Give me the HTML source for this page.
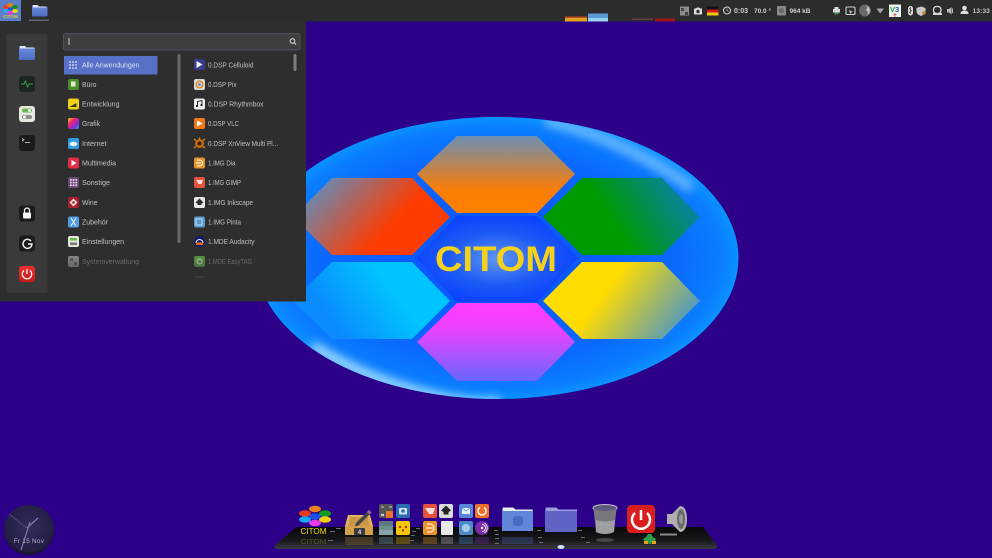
<!DOCTYPE html>
<html><head><meta charset="utf-8">
<style>
html,body{margin:0;padding:0;width:992px;height:558px;overflow:hidden;background:#2c0089}
body{position:relative;font-family:"Liberation Sans",sans-serif}
svg{position:absolute;left:0;top:0;filter:blur(.35px)}
</style></head><body>
<svg width="992" height="558" viewBox="0 0 992 558" xmlns="http://www.w3.org/2000/svg" font-family="Liberation Sans, sans-serif">
<defs>
<radialGradient id="ell" cx="0.5" cy="0.5" r="0.5"><stop offset="0" stop-color="#0a50ff"/><stop offset=".72" stop-color="#0a68ff"/><stop offset=".93" stop-color="#0a7eff"/><stop offset="1" stop-color="#0a92ff"/></radialGradient>
<clipPath id="ec"><ellipse cx="497" cy="258" rx="241.500" ry="141"/></clipPath>
<filter id="b5" x="-20%" y="-20%" width="140%" height="140%"><feGaussianBlur stdDeviation="5"/></filter>
<linearGradient id="hT" x1="0" y1="0" x2="0" y2="1"><stop offset="0" stop-color="#6c8fb4"/><stop offset=".7" stop-color="#fa7d05"/><stop offset="1" stop-color="#ff8000"/></linearGradient>
<linearGradient id="hL" gradientUnits="userSpaceOnUse" x1="322" y1="172" x2="385" y2="232"><stop offset="0" stop-color="#5e8fc0"/><stop offset="1" stop-color="#ff3c00"/></linearGradient>
<linearGradient id="hR" gradientUnits="userSpaceOnUse" x1="622" y1="238" x2="690" y2="195"><stop offset="0" stop-color="#009a00"/><stop offset="1" stop-color="#0a80a8"/></linearGradient>
<linearGradient id="hLL" gradientUnits="userSpaceOnUse" x1="335" y1="325" x2="390" y2="285"><stop offset="0" stop-color="#0a8cff"/><stop offset="1" stop-color="#00c4ff"/></linearGradient>
<linearGradient id="hLR" gradientUnits="userSpaceOnUse" x1="600" y1="298" x2="670" y2="350"><stop offset="0" stop-color="#ffdc00"/><stop offset="1" stop-color="#4a96c8"/></linearGradient>
<linearGradient id="hB" x1="0" y1="0" x2="0" y2="1"><stop offset="0" stop-color="#ff3cff"/><stop offset=".3" stop-color="#f040ff"/><stop offset="1" stop-color="#6a66ff"/></linearGradient>
<radialGradient id="hC" cx=".5" cy=".5" r=".55"><stop offset="0" stop-color="#5f96f0"/><stop offset=".55" stop-color="#1c5af5"/><stop offset="1" stop-color="#0a40ff"/></radialGradient>
<linearGradient id="plate" x1="0" y1="0" x2="0" y2="1"><stop offset="0" stop-color="#08080a"/><stop offset=".6" stop-color="#18181c"/><stop offset="1" stop-color="#3a3a40"/></linearGradient>
<linearGradient id="fold" x1="0" y1="0" x2="0" y2="1"><stop offset="0" stop-color="#6e8fde"/><stop offset="1" stop-color="#4c6cc4"/></linearGradient>
<radialGradient id="clk" cx=".5" cy=".45" r=".55"><stop offset="0" stop-color="#332d60"/><stop offset=".85" stop-color="#241f44"/><stop offset="1" stop-color="#17132c"/></radialGradient>
<linearGradient id="fade" x1="0" y1="0" x2="0" y2="1"><stop offset="0" stop-color="#2e2e2e" stop-opacity="0"/><stop offset="1" stop-color="#2e2e2e" stop-opacity="1"/></linearGradient>
<linearGradient id="rain" x1="0" y1="0" x2="1" y2="1"><stop offset="0" stop-color="#f0d020"/><stop offset=".35" stop-color="#f02070"/><stop offset=".7" stop-color="#8030e0"/><stop offset="1" stop-color="#20a0e0"/></linearGradient>
<linearGradient id="pw" x1="0" y1="0" x2="0" y2="1"><stop offset="0" stop-color="#e83030"/><stop offset="1" stop-color="#c81a1a"/></linearGradient>
</defs>

<!-- wallpaper logo -->
<ellipse cx="497" cy="258" rx="241.500" ry="141" fill="url(#ell)"/>
<g clip-path="url(#ec)">
<path d="M312 346Q360 376 417 392T500 402" fill="none" stroke="#bfe6ff" stroke-width="10" opacity=".9" filter="url(#b5)"/>
<path d="M545 120Q625 140 692 188" fill="none" stroke="#8cccff" stroke-width="10" opacity=".8" filter="url(#b5)"/>
</g>
<polygon points="457,216 537,216 578,258 537,302 457,302 416,258" fill="url(#hC)"/>
<polygon points="417,174 457,136 537,136 575,174 537,213 457,213" fill="url(#hT)"/>
<polygon points="293,217 332,178 412,178 450,217 412,255 332,255" fill="url(#hL)"/>
<polygon points="543,217 582,178 662,178 700,217 662,255 582,255" fill="url(#hR)"/>
<polygon points="293,301 332,262 412,262 450,301 412,339 332,339" fill="url(#hLL)"/>
<polygon points="543,301 582,262 662,262 700,301 662,339 582,339" fill="url(#hLR)"/>
<polygon points="417,342 457,303 537,303 575,342 537,381 457,381" fill="url(#hB)"/>
<text x="496" y="271" text-anchor="middle" font-size="35" font-weight="bold" fill="#f4d21c" textLength="122" lengthAdjust="spacingAndGlyphs">CITOM</text>

<!-- top panel -->
<rect x="0" y="0" width="992" height="21.500" fill="#2c2c2c"/>
<rect x="0" y="0" width="21" height="21" fill="#5b7ec8"/>
<ellipse cx="6" cy="7" rx="3" ry="2" fill="#e84020"/><ellipse cx="10" cy="5" rx="3" ry="2" fill="#f08010"/><ellipse cx="15" cy="7" rx="3" ry="2" fill="#109020"/><ellipse cx="6" cy="11" rx="3" ry="2" fill="#20b0f0"/><ellipse cx="10" cy="13" rx="3" ry="2" fill="#e040e0"/><ellipse cx="15" cy="11" rx="3" ry="2" fill="#f0d010"/><ellipse cx="10.500" cy="9" rx="2.500" ry="1.500" fill="#1050e0"/>
<text x="10.500" y="18" text-anchor="middle" font-size="4.500" font-weight="bold" fill="#e8d030">CITOM</text>
<path d="M32 6 a1 1 0 0 1 1-1 h4 l1.500 1.500 h8 a1 1 0 0 1 1 1 V15.500 a1 1 0 0 1-1 1 H33 a1 1 0 0 1-1-1z" fill="url(#fold)"/><path d="M33 5 h4.500 l1.500 1.500 h7 v1 H33z" fill="#dfe6f5"/>
<rect x="29" y="19.500" width="20" height="1.500" fill="#5c6475"/>

<!-- panel applet graph -->
<rect x="565" y="18" width="22" height="3.500" fill="#e0a020"/><rect x="565" y="16.500" width="22" height="1.500" fill="#c04a20"/><rect x="588" y="13.500" width="20" height="8" fill="#5a9ad8"/><rect x="588" y="18" width="20" height="3.500" fill="#9ad0f0"/><rect x="632" y="18.500" width="21" height="1.500" fill="#6a4048"/><rect x="655" y="18.500" width="20" height="3" fill="#a01818"/>

<!-- tray -->
<g fill="#cfcfcf">
<rect x="680" y="6.500" width="9" height="9" fill="#8d8d8d"/><path d="M681 8h3v3h-3zM685 12h3v3h-3z" fill="#444"/>
<path d="M694 8.500h2l1-1h2l1 1h2v6h-8z" fill="#dcdcdc"/><circle cx="698" cy="11.500" r="1.700" fill="#333"/>
<rect x="707" y="6.500" width="11.500" height="3" fill="#111"/><rect x="707" y="9.500" width="11.500" height="3" fill="#d81818"/><rect x="707" y="12.500" width="11.500" height="3" fill="#f0c810"/>
<circle cx="727" cy="10.500" r="3.500" fill="none" stroke="#d0d0d0" stroke-width="1.100"/><path d="M727 8.500v2l1.500 1" fill="none" stroke="#d0d0d0" stroke-width=".7"/>
<text x="734" y="13" font-size="7" font-weight="bold">0:03</text>
<text x="754" y="13" font-size="6.500" font-weight="bold">70.0 °</text>
<rect x="777" y="6" width="9" height="9.500" rx="1" fill="#8a8a8a"/><circle cx="781.500" cy="10.700" r="2.500" fill="#6a6a6a"/>
<text x="789.500" y="13" font-size="6.500" font-weight="bold">964 kB</text>
<path d="M833 9h7v3.500h-7z" fill="#d8d8d8"/><rect x="834.500" y="7" width="4" height="2" fill="#d8d8d8"/><rect x="834.500" y="12.500" width="4" height="2" fill="#3f9a3f"/>
<rect x="846" y="7" width="9" height="7.500" rx="1" fill="none" stroke="#d0d0d0" stroke-width="1.100"/><path d="M849 10l4 2-2 .5-.5 1.500z" fill="#d0d0d0"/>
<circle cx="865" cy="10.500" r="6" fill="#6a6a6a"/><path d="M865 5.500a5 5 0 0 1 2 9.500 3 3 0 0 0-2-5 2 2 0 0 0 0-4.500z" fill="#c8c8c8"/>
<path d="M876.500 8.500h7.500l-3.750 5z" fill="#a8a8a8"/>
<rect x="889" y="4.500" width="12" height="12.500" fill="#eaf4ea"/><text x="890" y="12" font-size="7.500" font-weight="bold" fill="#1a9a3a">V</text><text x="895" y="12" font-size="7.500" font-weight="bold" fill="#2060c0">3</text><text x="893.500" y="16.500" font-size="5.500" font-weight="bold" fill="#d03030">e</text>
<rect x="908" y="6" width="5" height="9.500" rx="2.500" fill="#d8d8d8"/><path d="M909 8l2.500 2.500-2.500 2.500M910.500 7v7" fill="none" stroke="#333" stroke-width=".6"/>
<path d="M921 6.500l4.500 1.500v3.500c0 2-2 3.500-4.500 4.500-2.500-1-4.500-2.500-4.500-4.500V8z" fill="#c8c8c8"/><circle cx="924" cy="13" r="1.800" fill="#c88030"/>
<rect x="933.500" y="6.500" width="7.500" height="7" rx="3" fill="none" stroke="#d8d8d8" stroke-width="1.300"/><rect x="933" y="13" width="9" height="2" fill="#d8d8d8"/>
<path d="M947 9h2l2.500-2v7.500l-2.500-2h-2z" fill="#b8b8b8"/><path d="M952.500 8.500v4.500" stroke="#b8b8b8" stroke-width="1"/>
<circle cx="964.500" cy="8" r="2.300" fill="#dcdcdc"/><path d="M960.500 14c0-2.500 1.500-3.500 4-3.500s4 1 4 3.500z" fill="#dcdcdc"/>
<text x="972.500" y="13" font-size="6.800" font-weight="bold" fill="#c0c0c0">13:33</text>
</g>

<!-- menu -->
<rect x="0" y="21.500" width="306" height="280" fill="#2e2e2e"/>
<rect x="6.500" y="34" width="41" height="259" fill="#3a3a3a"/>
<rect x="63.500" y="33.500" width="236.500" height="16.500" rx="2" fill="#3f3f3f" stroke="#545a6c" stroke-width=".8"/>
<rect x="68.500" y="38" width="1" height="7" fill="#cfcfcf"/>
<circle cx="292.500" cy="41" r="2.300" fill="none" stroke="#e0e0e0" stroke-width="1"/><path d="M294.300 42.800l1.800 1.800" stroke="#e0e0e0" stroke-width="1"/>
<rect x="64" y="56" width="93.500" height="18.500" fill="#5770c8"/>
<rect x="177.500" y="54" width="3" height="189" rx="1.500" fill="#6a6a6a"/>
<rect x="293.500" y="54" width="3" height="17" rx="1.500" fill="#7d7d7d"/>

<!-- sidebar icons -->
<path d="M19 47a1 1 0 0 1 1-1h4.500l1.500 1.500h8a1 1 0 0 1 1 1V59a1 1 0 0 1-1 1H20a1 1 0 0 1-1-1z" fill="url(#fold)"/><path d="M20 46h5l1.500 1.500h7.500v1H20z" fill="#dfe6f5"/>
<rect x="19" y="76" width="16" height="16" rx="3" fill="#1e2420"/><path d="M21 84h3l1.500-3 2 6 1.500-3h4" fill="none" stroke="#35a84a" stroke-width=".9"/>
<rect x="19" y="106" width="16" height="16" rx="3" fill="#e8e8e2"/><rect x="22" y="108.500" width="10" height="4" rx="2" fill="#6cb84c"/><rect x="22" y="115" width="10" height="4" rx="2" fill="#8c8c8c"/><circle cx="29.500" cy="110.500" r="1.500" fill="#fff"/><circle cx="24.500" cy="117" r="1.500" fill="#fff"/>
<rect x="19" y="135" width="16" height="16" rx="3" fill="#1b1b1b"/><path d="M22 138.500l2 1.300-2 1.300" fill="none" stroke="#ddd" stroke-width=".8"/><rect x="25" y="142" width="5" height=".8" fill="#ccc"/>
<rect x="19" y="205.500" width="16" height="16" rx="3" fill="#1b1b1b"/><rect x="23" y="212.500" width="8" height="6" rx="1" fill="#f4f4f4"/><path d="M24.500 212.500v-2a2.500 2.500 0 0 1 5 0v2" fill="none" stroke="#f4f4f4" stroke-width="1.200"/>
<rect x="19" y="235.500" width="16" height="16" rx="3" fill="#1b1b1b"/><path d="M31 241a4.500 4.500 0 1 0 1 3h-4" fill="none" stroke="#f4f4f4" stroke-width="1.400"/>
<rect x="19" y="266" width="16" height="16" rx="3" fill="url(#pw)"/><path d="M24 270.500a4.700 4.700 0 1 0 6 0" fill="none" stroke="#fff" stroke-width="1.200"/><path d="M27 269v5" stroke="#fff" stroke-width="1.200"/>

<!-- category icons -->
<g fill="#e6ecf8"><circle cx="70" cy="62" r=".9"/><circle cx="73" cy="62" r=".9"/><circle cx="76" cy="62" r=".9"/><circle cx="70" cy="65" r=".9"/><circle cx="73" cy="65" r=".9"/><circle cx="76" cy="65" r=".9"/><circle cx="70" cy="68" r=".9"/><circle cx="73" cy="68" r=".9"/><circle cx="76" cy="68" r=".9"/></g>
<rect x="68" y="79" width="11" height="11" rx="2" fill="#4b8f2c"/><rect x="71" y="81.500" width="4.500" height="5" fill="#dff0d0"/>
<rect x="68" y="98.500" width="11" height="11" rx="2" fill="#f0d010"/><path d="M69.500 107l7-4v4z" fill="#333"/>
<rect x="68" y="118" width="11" height="11" rx="2" fill="url(#rain)"/>
<rect x="68" y="138" width="11" height="11" rx="2" fill="#2e9be0"/><ellipse cx="73.500" cy="144" rx="4" ry="2.200" fill="#e8f4fc"/>
<rect x="68" y="157.500" width="11" height="11" rx="2" fill="#e02c44"/><path d="M71.500 160l5 3-5 3z" fill="#fff"/>
<rect x="68" y="177" width="11" height="11" rx="2" fill="#6e4a78"/><g fill="#e8dcec"><rect x="70" y="179" width="1.700" height="1.700"/><rect x="72.700" y="179" width="1.700" height="1.700"/><rect x="75.400" y="179" width="1.700" height="1.700"/><rect x="70" y="181.700" width="1.700" height="1.700"/><rect x="72.700" y="181.700" width="1.700" height="1.700"/><rect x="75.400" y="181.700" width="1.700" height="1.700"/><rect x="70" y="184.400" width="1.700" height="1.700"/><rect x="72.700" y="184.400" width="1.700" height="1.700"/><rect x="75.400" y="184.400" width="1.700" height="1.700"/></g>
<rect x="68" y="197" width="11" height="11" rx="2" fill="#a82030"/><path d="M73.500 198.500l4 4-4 4-4-4z" fill="#f4e0e0"/><circle cx="73.500" cy="202.500" r="1.300" fill="#a82030"/>
<rect x="68" y="216.500" width="11" height="11" rx="2" fill="#4f9ee8"/><path d="M71 218l5 8M76 218l-5 8" stroke="#fff" stroke-width=".9"/>
<rect x="68" y="236" width="11" height="11" rx="2" fill="#e4e8d8"/><rect x="70" y="238" width="7" height="2.500" fill="#6cb84c"/><rect x="70" y="242.500" width="7" height="2.500" fill="#777"/>
<rect x="68" y="256" width="11" height="11" rx="2" fill="#8a8a8a"/><rect x="70" y="258" width="3" height="3" fill="#5c5c5c"/><rect x="74" y="262" width="3" height="3" fill="#5c5c5c"/>

<g font-size="7.200" fill="#c2c2c2">
<text x="82" y="67.500" fill="#dde2f2" textLength="57.500" lengthAdjust="spacingAndGlyphs">Alle Anwendungen</text>
<text x="82" y="87" textLength="14.500" lengthAdjust="spacingAndGlyphs">Büro</text>
<text x="82" y="106.500" textLength="37.500" lengthAdjust="spacingAndGlyphs">Entwicklung</text>
<text x="82" y="126.200" textLength="18" lengthAdjust="spacingAndGlyphs">Grafik</text>
<text x="82" y="146" textLength="24.500" lengthAdjust="spacingAndGlyphs">Internet</text>
<text x="82" y="165.500" textLength="34" lengthAdjust="spacingAndGlyphs">Multimedia</text>
<text x="82" y="185.200" textLength="28" lengthAdjust="spacingAndGlyphs">Sonstige</text>
<text x="82" y="205" textLength="15.500" lengthAdjust="spacingAndGlyphs">Wine</text>
<text x="82" y="224.500" textLength="26" lengthAdjust="spacingAndGlyphs">Zubehör</text>
<text x="82" y="244.200" textLength="42" lengthAdjust="spacingAndGlyphs">Einstellungen</text>
<text x="82" y="264" fill="#7a7a7a" textLength="57" lengthAdjust="spacingAndGlyphs">Systemverwaltung</text>
<text x="208" y="67.500" textLength="45.500" lengthAdjust="spacingAndGlyphs">0.DSP Celluloid</text>
<text x="208" y="87" textLength="28.500" lengthAdjust="spacingAndGlyphs">0.DSP Pix</text>
<text x="208" y="106.500" textLength="55.500" lengthAdjust="spacingAndGlyphs">0.DSP Rhythmbox</text>
<text x="208" y="126.200" textLength="31" lengthAdjust="spacingAndGlyphs">0.DSP VLC</text>
<text x="208" y="146" textLength="70" lengthAdjust="spacingAndGlyphs">0.DSP XnView Multi Pl...</text>
<text x="208" y="165.500" textLength="27.500" lengthAdjust="spacingAndGlyphs">1.IMG Dia</text>
<text x="208" y="185.200" textLength="33" lengthAdjust="spacingAndGlyphs">1.IMG GIMP</text>
<text x="208" y="205" textLength="45" lengthAdjust="spacingAndGlyphs">1.IMG Inkscape</text>
<text x="208" y="224.500" textLength="33" lengthAdjust="spacingAndGlyphs">1.IMG Pinta</text>
<text x="208" y="244.200" textLength="46.500" lengthAdjust="spacingAndGlyphs">1.MDE Audacity</text>
<text x="208" y="264" fill="#7a7a7a" textLength="44" lengthAdjust="spacingAndGlyphs">1.MDE EasyTAG</text>
</g>

<!-- app icons -->
<rect x="194" y="59" width="11" height="11" rx="2" fill="#3a3a90"/><path d="M196.500 61l6 3.500-6 3.500z" fill="#fff"/>
<rect x="194" y="79" width="11" height="11" rx="2" fill="#d8d8d8"/><circle cx="199.500" cy="84.500" r="3.300" fill="none" stroke="#e08a20" stroke-width="1.500"/><circle cx="199.500" cy="84.500" r="1.300" fill="#4a80d0"/>
<rect x="194" y="98.500" width="11" height="11" rx="2" fill="#f0f0f0"/><path d="M197.500 106v-4.500l4.500-1v4.500" fill="none" stroke="#222" stroke-width=".9"/><circle cx="197" cy="106" r="1.100" fill="#222"/><circle cx="201.500" cy="105" r="1.100" fill="#222"/>
<rect x="194" y="118" width="11" height="11" rx="2" fill="#f07a18"/><path d="M197 120.500l5.500 3-5.500 3z" fill="#fff"/>
<circle cx="199.500" cy="143.500" r="4.500" fill="#c86a10"/><circle cx="199.500" cy="143.500" r="2" fill="#3a2008"/><path d="M194 139l2 1.500M205 139l-2 1.500M194 148l2-1.500M205 148l-2-1.500M199.500 137.500v2" stroke="#e08a20" stroke-width="1.200"/>
<rect x="194" y="157.500" width="11" height="11" rx="2" fill="#e8942a"/><path d="M197 160h2.500a3 3 0 0 1 0 6H197M196 163h5" fill="none" stroke="#fff" stroke-width=".9"/>
<rect x="194" y="177" width="11" height="11" rx="2" fill="#e4523c"/><path d="M196 180l7 0-1.500 4h-3z" fill="#f4e0d8"/>
<rect x="194" y="197" width="11" height="11" rx="2" fill="#e8e8e8"/><path d="M199.500 198.500l4 4-2 1v1.500h-4v-1.500l-2-1z" fill="#2e2e2e"/>
<rect x="194" y="216.500" width="11" height="11" rx="2" fill="#5a98d0"/><rect x="196" y="219" width="6" height="6" fill="none" stroke="#dcecf8" stroke-width=".8"/>
<circle cx="199.500" cy="241.500" r="5.500" fill="#10186a"/><path d="M196 243a3.500 3.500 0 0 1 7 0" fill="none" stroke="#eee" stroke-width="1"/><rect x="196" y="242.500" width="7" height="2.500" fill="#e86a10"/>
<rect x="194" y="256" width="11" height="11" rx="2" fill="#5a9448"/><circle cx="199.500" cy="261.500" r="2.500" fill="none" stroke="#cfe8c8" stroke-width="1"/>
<rect x="60" y="254" width="230" height="16" fill="url(#fade)" opacity=".45"/>
<rect x="195" y="276" width="9" height="2" fill="#3b3b3b"/>

<!-- clock -->
<circle cx="29" cy="530" r="25" fill="url(#clk)"/>
<path d="M9 514L27 528" stroke="#544e70" stroke-width="1"/>
<path d="M38 518L27 528" stroke="#9a94b8" stroke-width="1"/>
<path d="M30 522L21 550" stroke="#7e78a0" stroke-width="1.200"/>
<text x="29" y="543" text-anchor="middle" font-size="6.300" fill="#b8b4d0" letter-spacing=".3">Fr 15 Nov</text>

<!-- dock plate -->
<path d="M297 527H703L717 545Q718 549 713 549H278Q273 549 275 545Z" fill="url(#plate)"/>
<g fill="#6a6a70"><rect x="330" y="531" width="5" height="1"/><rect x="336" y="528" width="5" height="1"/><rect x="328" y="540" width="5" height="1"/><rect x="412" y="531" width="4" height="1"/><rect x="411" y="535" width="4" height="1"/><rect x="410" y="540" width="4" height="1"/><rect x="416" y="528" width="4" height="1"/><rect x="494" y="530" width="4" height="1"/><rect x="495" y="534" width="4" height="1"/><rect x="495" y="538" width="4" height="1"/><rect x="495" y="543" width="4" height="1"/><rect x="537" y="530" width="4" height="1"/><rect x="538" y="537" width="4" height="1"/><rect x="539" y="542" width="4" height="1"/><rect x="578" y="530" width="4" height="1"/><rect x="581" y="537" width="4" height="1"/><rect x="586" y="542" width="4" height="1"/></g>

<!-- CITOM dock logo -->
<ellipse cx="315" cy="509" rx="6" ry="3.200" fill="#e8801a"/><ellipse cx="305" cy="513.500" rx="6" ry="3.200" fill="#e43a18"/><ellipse cx="325" cy="513.500" rx="6" ry="3.200" fill="#109c20"/><ellipse cx="305" cy="519.500" rx="6" ry="3.200" fill="#18a8f8"/><ellipse cx="325" cy="519.500" rx="6" ry="3.200" fill="#f0d010"/><ellipse cx="315" cy="523" rx="6" ry="3.200" fill="#e838e8"/><ellipse cx="315" cy="516.500" rx="6" ry="3.200" fill="#1a50e8"/>
<text x="313.500" y="534" text-anchor="middle" font-size="8" fill="#f4dc10" textLength="26" lengthAdjust="spacingAndGlyphs">CITOM</text>
<text x="313.500" y="544" text-anchor="middle" font-size="7.500" fill="#6a6420" textLength="26" lengthAdjust="spacingAndGlyphs" opacity=".8">CITOM</text>

<!-- box w/ pencil -->
<path d="M348 515H370L373 526V535H345V526Z" fill="#e6b45e"/><path d="M345 526H373V535H345z" fill="#d4a04a"/><path d="M350 517H368L370 526H348z" fill="#c89848"/>
<rect x="354" y="528" width="11" height="7" rx="1" fill="#3a3a3a"/><text x="359.500" y="534" text-anchor="middle" font-size="6" font-weight="bold" fill="#e4e4e4">4</text>
<path d="M356 523L369 510L371.500 512.500L358.500 525.500L355 526.500Z" fill="#444"/><path d="M367 512l2-2 2.500 2.500-2 2z" fill="#9a6a9a"/>
<rect x="345" y="537" width="28" height="8" fill="#6a5430" opacity=".55"/>

<!-- small grid icons -->
<rect x="379" y="504" width="14" height="14" rx="2" fill="#555"/><rect x="386" y="511" width="7" height="7" fill="#e8722c"/><path d="M381 507h3M389 507h3M381 514l3 2M384 514l-3 2" stroke="#eee" stroke-width=".8"/>
<rect x="396" y="504" width="14" height="14" rx="2" fill="#2f6cb0"/><rect x="399" y="508" width="8" height="6.500" rx="1" fill="#cfe2f4"/><circle cx="403" cy="511" r="1.800" fill="#2f6cb0"/>
<rect x="379" y="521" width="14" height="14" rx="2" fill="#6f8e90"/><rect x="379" y="521" width="14" height="5" fill="#5c7a80"/><rect x="379" y="530" width="14" height="5" fill="#88a4a8"/>
<rect x="396" y="521" width="14" height="14" rx="2" fill="#f4c808"/><circle cx="400" cy="527" r="1.200" fill="#a83808"/><circle cx="406" cy="527" r="1.200" fill="#a83808"/><circle cx="403" cy="530.500" r="1.200" fill="#a83808"/>
<rect x="423" y="504" width="14" height="14" rx="2" fill="#e4523c"/><path d="M425 508h10l-2 6h-4z" fill="#f4e0d8"/>
<rect x="439" y="504" width="14" height="14" rx="2" fill="#dcdcdc"/><path d="M446 505.500l5 5-2.500 1.500v2.500h-5V512l-2.500-1.500z" fill="#222"/>
<rect x="459" y="504" width="14" height="14" rx="2" fill="#5a88d8"/><rect x="462" y="508" width="8" height="6" fill="#e8eefa"/><path d="M462 508l4 3 4-3" fill="none" stroke="#5a88d8" stroke-width=".7"/>
<rect x="475" y="504" width="14" height="14" rx="2" fill="#f07028"/><path d="M480 507.500a4 4 0 1 0 4 0" fill="none" stroke="#fff" stroke-width="1.400"/>
<rect x="423" y="521" width="14" height="14" rx="2" fill="#e8942a"/><path d="M427 524h3a4 4 0 0 1 0 8h-3M426 528h7" fill="none" stroke="#fff" stroke-width="1"/>
<rect x="441" y="521" width="12" height="14" rx="1" fill="#e8e8e8"/>
<rect x="459" y="521" width="14" height="14" rx="2" fill="#4a8cc8"/><circle cx="466" cy="528" r="4" fill="#a8cce8"/>
<circle cx="482" cy="528" r="7" fill="#7a2aa8"/><path d="M482 524.500a3.500 3.500 0 0 1 0 7M484.500 523a6 6 0 0 1 0 10" fill="none" stroke="#e8d8f4" stroke-width="1"/><circle cx="482" cy="528" r="1.200" fill="#fff"/>
<g opacity=".45"><rect x="379" y="537" width="14" height="7" fill="#5c7a80"/><rect x="396" y="537" width="14" height="7" fill="#a08408"/><rect x="423" y="537" width="14" height="7" fill="#a86a20"/><rect x="441" y="537" width="12" height="7" fill="#8a8a8a"/><rect x="459" y="537" width="14" height="7" fill="#3a6a98"/><rect x="475" y="537" width="14" height="7" fill="#5a2080"/></g>

<!-- folders -->
<path d="M502 509a1.500 1.500 0 0 1 1.500-1.500H513l2.500 2h16a1.500 1.500 0 0 1 1.500 1.500v20H502z" fill="#5f86d8"/><path d="M503 507.500h10l2.500 2h17v1.500H503z" fill="#e8ecf4"/><rect x="513" y="516" width="10" height="10" rx="3" fill="#4a6cc0"/>
<path d="M545 509a1.500 1.500 0 0 1 1.500-1.500H556l2.500 2h17a1.500 1.500 0 0 1 1.500 1.500v21h-32z" fill="#5f64c4"/><path d="M546 507.500h10l2.500 2h18.500v1.500H546z" fill="#9c9ce0"/>
<rect x="502" y="537" width="31" height="7" fill="#3a4a80" opacity=".5"/>

<!-- trash -->
<ellipse cx="605" cy="508" rx="12" ry="3.500" fill="#5e5a80" stroke="#bdbdc8" stroke-width="1"/>
<path d="M593.500 509L596 532Q605 536 614 532L616.500 509Q605 513 593.500 509Z" fill="#77777c"/><path d="M596 520Q605 523 615 520L614 532Q605 536 596 532z" fill="#a0a0a4"/>
<ellipse cx="605" cy="540" rx="9" ry="2" fill="#666" opacity=".6"/>

<!-- power -->
<rect x="627" y="505" width="28" height="28" rx="4" fill="#d81e1e"/><path d="M635 513a9 9 0 1 0 12 0" fill="none" stroke="#fff" stroke-width="2.500"/><path d="M641 510v10" stroke="#fff" stroke-width="2.500"/>
<path d="M643 539l3-2 2-3h3l2 3 3 2-2 4-4 1-4-1z" fill="#2a9c4a"/><rect x="644" y="541" width="4" height="3" fill="#e8a020"/><rect x="652" y="541" width="4" height="3" fill="#e8a020"/>

<!-- speaker -->
<path d="M667 514h5l8-8c5 0 7 6 7 13s-2 13-7 13l-8-8h-5z" fill="#b0b0b0"/><ellipse cx="681" cy="519" rx="4" ry="10" fill="#6a6a6a"/><ellipse cx="681" cy="519" rx="2" ry="5" fill="#9a9a9a"/>
<rect x="660" y="533.500" width="17" height="2" fill="#8a8a8a"/>

<ellipse cx="561" cy="547" rx="3.500" ry="2" fill="#cfe4ff"/>
</svg>
</body></html>
